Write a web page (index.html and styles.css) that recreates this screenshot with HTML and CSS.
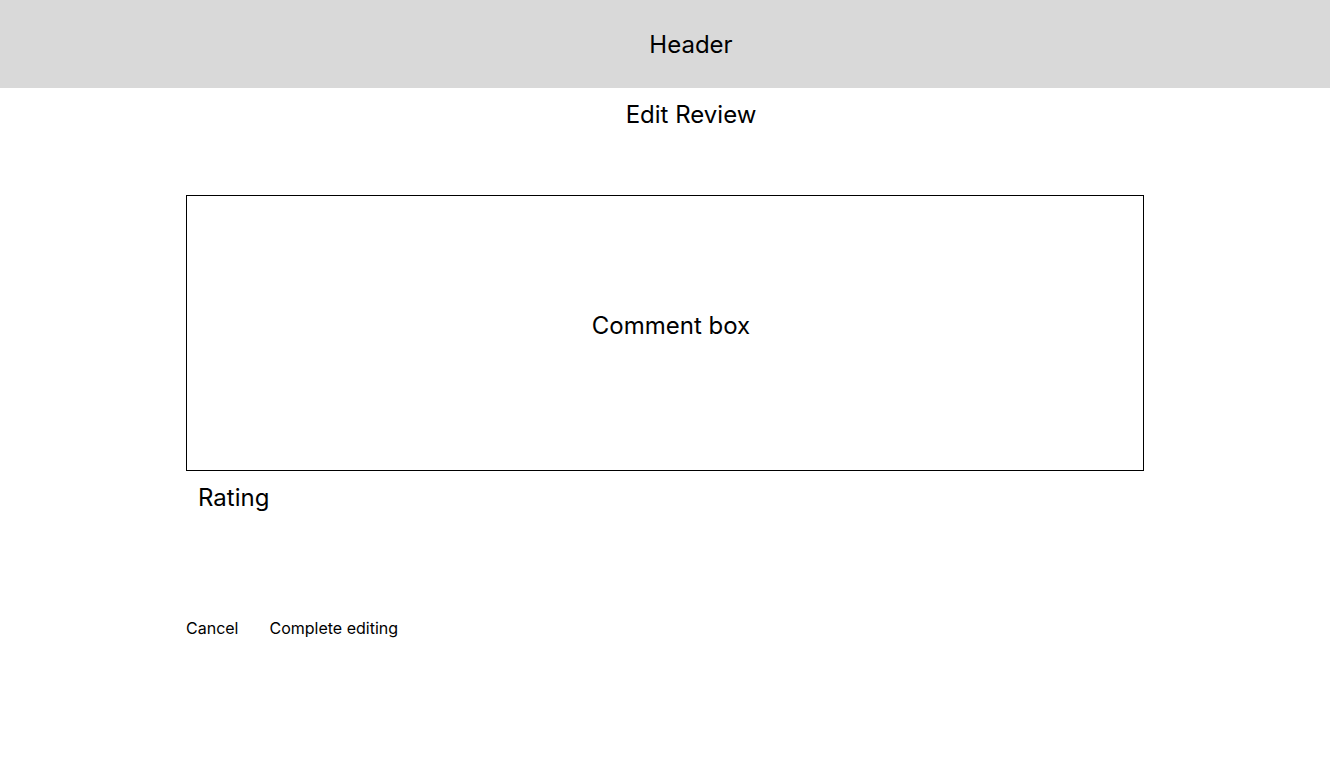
FILE: index.html
```html
<!DOCTYPE html>
<html>
<head>
<meta charset="utf-8">
<link rel="stylesheet" href="styles.css">
</head>
<body>
<header class="header"><span class="header-title">Header</span></header>
<main class="main">
  <h1 class="page-title">Edit Review</h1>
  <section class="form">
    <div class="comment-box"><span class="comment-label">Comment box</span></div>
    <div class="rating">Rating</div>
    <div class="actions">
      <button class="btn">Cancel</button>
      <button class="btn">Complete editing</button>
    </div>
  </section>
</main>
</body>
</html>
```
FILE: styles.css
```css
html, body {
  margin: 0;
  padding: 0;
  background: #fff;
  font-family: Inter, "Noto Sans", sans-serif;
  color: #000;
}
.header {
  box-sizing: border-box;
  height: 88px;
  background: #d9d9d9;
  display: flex;
  align-items: center;
  justify-content: center;
  padding: 1px 0 0 52px;
}
.header-title {
  font-size: 24px;
  line-height: 29px;
}
.main {
  display: flex;
  flex-direction: column;
}
.page-title {
  margin: 0;
  font-weight: 400;
  font-size: 24px;
  line-height: 29px;
  text-align: center;
  padding-left: 52px;
  padding-top: 12px;
}
.form {
  margin: 66px 0 0 186px;
  width: 958px;
}
.comment-box {
  box-sizing: border-box;
  height: 276px;
  border: 1px solid #000;
  display: flex;
  align-items: center;
  justify-content: center;
  padding: 0 0 16px 12px;
}
.comment-label {
  font-size: 24px;
  line-height: 29px;
}
.rating {
  font-size: 24px;
  line-height: 29px;
  padding: 12px 0 0 12px;
}
.actions {
  display: flex;
  gap: 31px;
  margin-top: 107px;
}
.btn {
  border: none;
  background: none;
  padding: 0;
  font-family: inherit;
  font-size: 16px;
  line-height: 19px;
  color: #000;
}
```
